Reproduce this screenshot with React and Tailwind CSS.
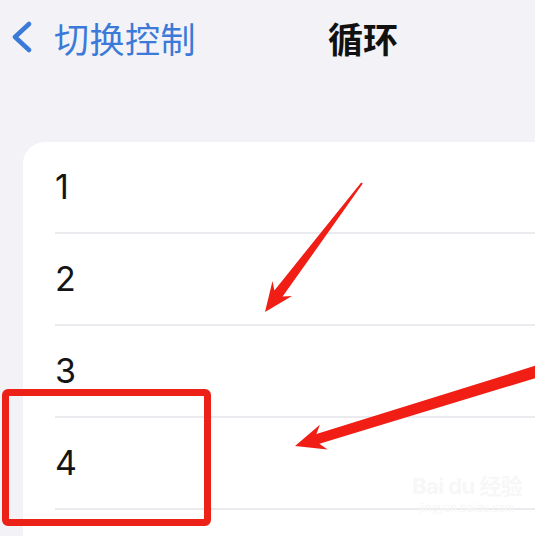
import React from 'react';

const rows = ['1', '2', '3', '4', ''];

function BackChevron() {
    return (
        <svg width="26" height="32" viewBox="0 0 26 32" fill="none">
            <path d="M20 3 L6 16 L20 29" stroke="#3b7ad8" strokeWidth="4.5" strokeLinecap="round" strokeLinejoin="round" />
        </svg>
    );
}

// red callout arrows drawn on top of the list
function Arrows() {
    return (
        <svg className="absolute inset-0 pointer-events-none" width="535" height="536" viewBox="0 0 535 536">
            <polygon
                fill="#f01e14"
                points="362.8,183.6 282.6,296.6 292,296 265,312 272.5,281 274.4,290.4 361.2,182.4"
            />
            <polygon
                fill="#f01e14"
                points="546.8,374.7 319.4,443.7 327.5,449.6 295,446 319.9,424.8 316.4,434.1 543.2,363.3"
            />
        </svg>
    );
}

export default function App() {
    return (
        <div className="relative w-[535px] h-[536px] overflow-hidden bg-[#f2f2f7]" style={{ fontFamily: 'Inter, "Noto Sans CJK SC", sans-serif' }}>
            {/* Nav bar */}
            <header className="h-[74px] flex items-center pl-[9px]">
                <div className="flex items-center gap-[19px] text-[#3b7ad8]">
                    <BackChevron />
                    <span className="text-[35px] leading-none tracking-[0.5px]" style={{ fontFamily: '"Noto Sans CJK SC", sans-serif' }}>切换控制</span>
                </div>
                <h1 className="ml-[132px] text-[35px] leading-none font-bold text-[#111]" style={{ fontFamily: '"Noto Sans CJK SC", sans-serif' }}>循环</h1>
            </header>

            {/* List */}
            <div className="mt-[68px] ml-[23px] bg-white rounded-tl-[22px]">
                {rows.map((n, i) => (
                    <div key={i} className="pl-[32px]">
                        <div className="h-[92px] flex items-center border-b-2 border-[#ebebef]">
                            <span className="text-[34px] text-[#141414] leading-none">{n}</span>
                        </div>
                    </div>
                ))}
            </div>

            {/* Watermark */}
            <div className="absolute left-[412px] top-[475px] flex flex-col items-center text-[#f7f7f7] select-none">
                <span className="text-[22px] font-bold leading-none tracking-tight">Bai du 经验</span>
                <span className="text-[11px] leading-none mt-[6px]">jingyan.baidu.com</span>
            </div>

            {/* Annotation */}
            <div className="absolute left-[2px] top-[389px] w-[209px] h-[137px] border-[7px] border-[#ec2118] rounded-[6px]" />
            <Arrows />
        </div>
    );
}
